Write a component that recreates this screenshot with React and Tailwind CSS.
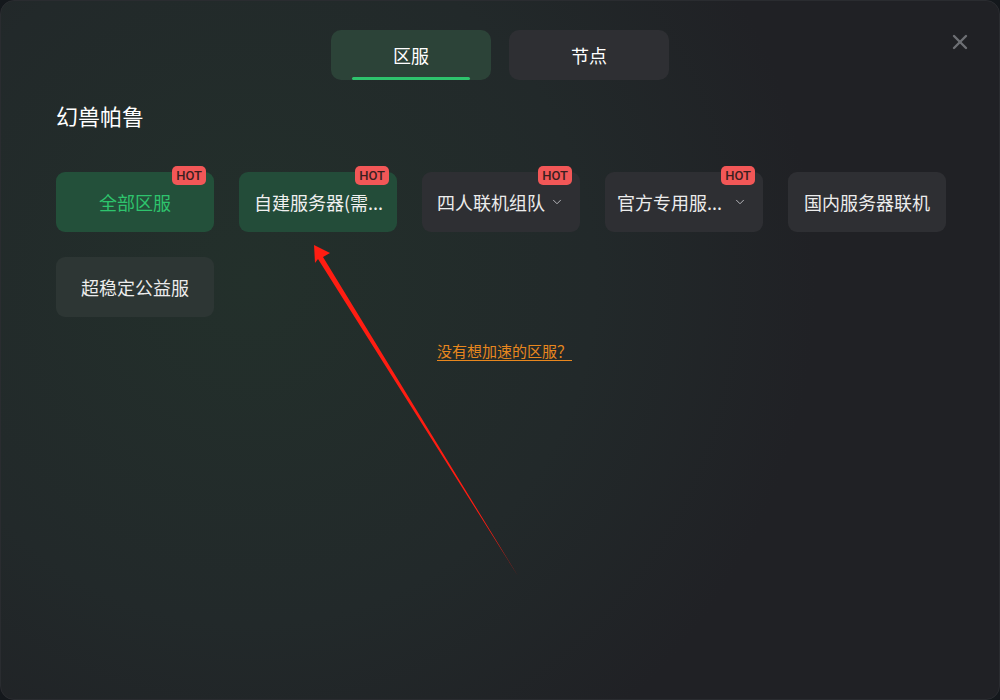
import React from 'react';
import { X, ChevronDown } from 'lucide-react';

const font = { fontFamily: '"Noto Sans CJK SC", "Noto Sans", sans-serif' };

const servers = [
    { label: '全部区服', hot: true, active: true },
    { label: '自建服务器(需...', hot: true, selected: true },
    { label: '四人联机组队', hot: true, menu: true },
    { label: '官方专用服...', hot: true, menu: true, wide: true },
    { label: '国内服务器联机' },
    { label: '超稳定公益服', soft: true },
];

const Card = ({ s }) => {
    let tone = 'bg-[#2e2f33] text-[#ececec]';
    if (s.active) tone = 'bg-[#23503a] text-[#2ec46d]';
    else if (s.selected) tone = 'bg-[#234c39] text-[#f0f0f0]';
    else if (s.soft) tone = 'bg-[#2d3634] text-[#ececec]';

    let pad = 'justify-center px-2';
    if (s.wide) pad = 'pl-[12px] pr-[12px]';
    else if (s.menu || s.selected) pad = 'pl-[15px] pr-[12px]';

    return (
        <div className={`relative h-[60px] rounded-[9px] flex items-center text-[18px] whitespace-nowrap ${tone} ${pad}`}>
            <span>{s.label}</span>
            {s.menu && (
                <ChevronDown className={`w-[14px] h-[14px] text-[#bfc0c4] shrink-0 ${s.wide ? 'ml-auto mr-[4px]' : 'ml-[5px]'}`} strokeWidth={1.6} />
            )}
            {s.hot && (
                <span className="absolute -top-[6px] right-[8px] h-[19px] px-[4px] rounded-[5px] bg-[#f25757] text-[#3a1f1f] text-[13px] font-medium leading-[19px]" style={{ fontFamily: 'Roboto, sans-serif' }}>
                    HOT
                </span>
            )}
        </div>
    );
};

const App = () => {
    return (
        <div className="w-[1000px] h-[700px] bg-[#14181c]" style={font}>
            <div className="relative w-full h-full rounded-[14px] border border-[#2a2c30] overflow-hidden bg-[#202125] bg-[radial-gradient(circle_at_250px_280px,#23302b_0%,#22292a_40%,#202125_66%)]">
                <button className="absolute top-[29px] right-[27px] text-[#6d6f74]">
                    <X className="w-[24px] h-[24px]" strokeWidth={2.4} />
                </button>

                {/* tabs */}
                <div className="flex justify-center gap-[18px] pt-[29px]">
                    <div className="relative w-[160px] h-[50px] rounded-[10px] bg-[#2c4338] flex items-center justify-center text-[18px] text-white">
                        区服
                        <span className="absolute bottom-0 left-[21px] right-[21px] h-[3px] rounded-full bg-[#2ec46d]" />
                    </div>
                    <div className="w-[160px] h-[50px] rounded-[10px] bg-[#2e2f33] flex items-center justify-center text-[18px] text-white">
                        节点
                    </div>
                </div>

                <div className="pl-[55px]">
                    <h2 className="mt-[20px] text-[22px] leading-[30px] text-white">幻兽帕鲁</h2>

                    <div className="mt-[42px] grid grid-cols-[repeat(5,158px)] gap-[25px]">
                        {servers.map((s) => (
                            <Card key={s.label} s={s} />
                        ))}
                    </div>
                </div>

                <div className="mt-[23px] flex justify-center pl-[9px]">
                    <a className="text-[15px] leading-[22px] text-[#e8871e] underline underline-offset-[3px]">没有想加速的区服？</a>
                </div>

                {/* annotation arrow */}
                <svg className="absolute -left-px -top-px pointer-events-none" width="1000" height="700">
                    <polygon points="314,245 330,253 323,257 518,576 318,259 315,263" fill="#ff1d12" />
                </svg>
            </div>
        </div>
    );
};

export default App;
